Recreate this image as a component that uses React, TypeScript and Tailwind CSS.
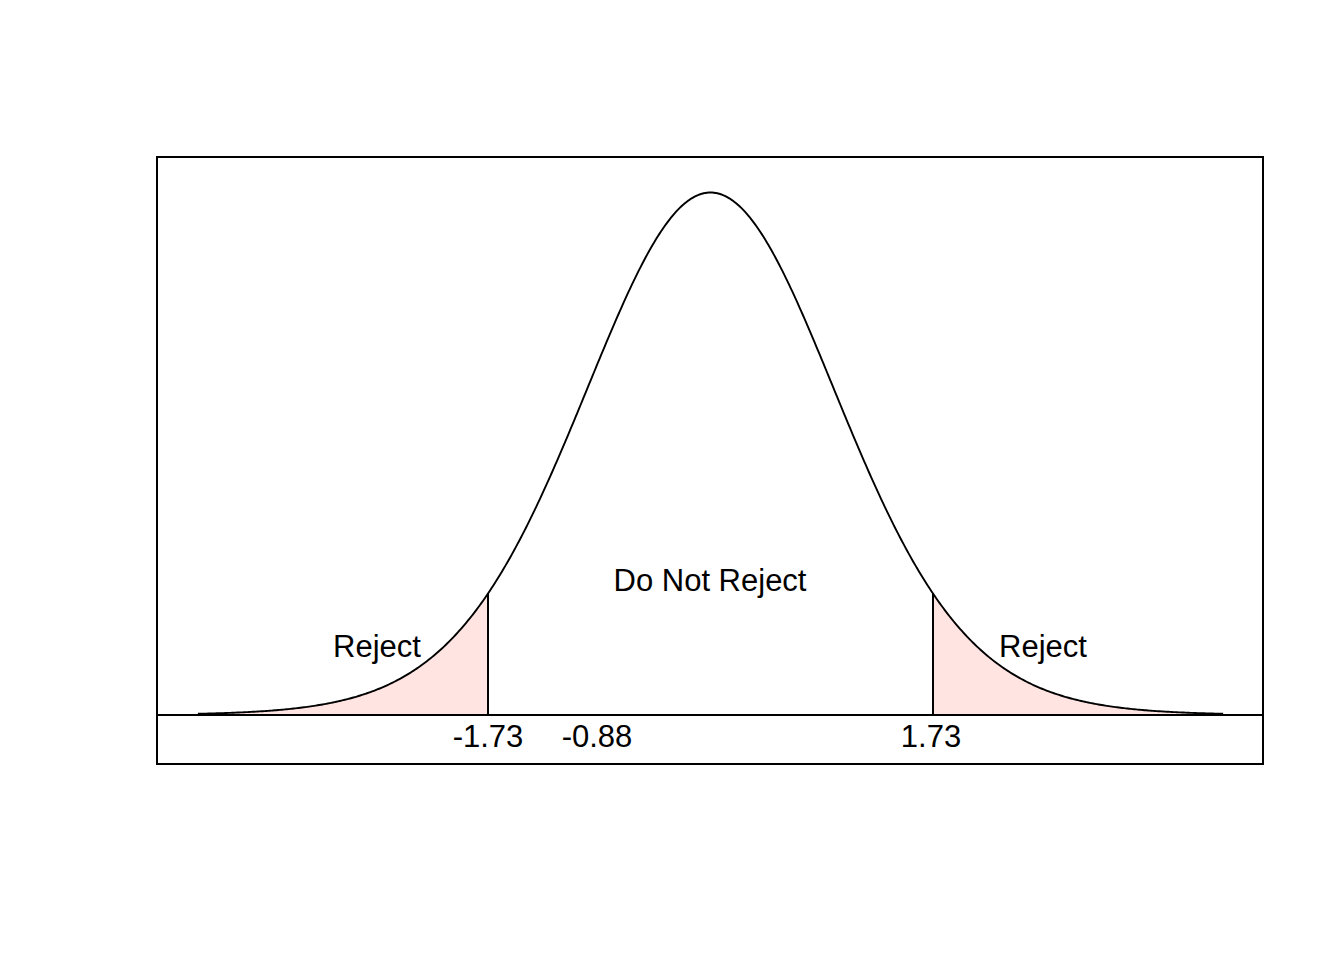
const CX = 710.5;
const SCALE = 128.8; // px per unit
const BASE = 715;
const PEAK = 522.5;
const DF = 19;
const LIM = 3.98;
const CRIT = 1.73;

// t density, scaled so f(0) = 1
function dens(z: number) {
	return Math.pow(1 + (z * z) / DF, -(DF + 1) / 2);
}

function px(z: number) {
	return CX + z * SCALE;
}

function py(z: number) {
	return BASE - PEAK * dens(z);
}

function curvePoints(from: number, to: number, steps: number) {
	const pts: string[] = [];
	for (let i = 0; i <= steps; i++) {
		const z = from + ((to - from) * i) / steps;
		pts.push(`${px(z).toFixed(2)},${py(z).toFixed(2)}`);
	}
	return pts;
}

function tailPolygon(from: number, to: number) {
	const pts = curvePoints(from, to, 120);
	pts.push(`${px(to).toFixed(2)},${BASE}`);
	pts.push(`${px(from).toFixed(2)},${BASE}`);
	return pts.join(" ");
}

const font = { fontFamily: '"Liberation Sans", Arial, sans-serif' };

function RejectionPlot() {
	const curve = curvePoints(-LIM, LIM, 600).join(" ");
	return (
		<svg width={1110} height={612} viewBox="155 155 1110 612" className="block" style={font}>
			<polygon points={tailPolygon(-LIM, -CRIT)} fill="#FFE4E1" />
			<polygon points={tailPolygon(CRIT, LIM)} fill="#FFE4E1" />
			<polyline points={curve} fill="none" stroke="#000" strokeWidth={1.9} strokeLinejoin="round" />
			<g stroke="#000" strokeWidth={2} shapeRendering="crispEdges">
				<line x1={157} y1={157} x2={1263} y2={157} />
				<line x1={157} y1={764} x2={1263} y2={764} />
				<line x1={157} y1={156} x2={157} y2={765} />
				<line x1={1263} y1={156} x2={1263} y2={765} />
				<line x1={157} y1={BASE} x2={1263} y2={BASE} />
				<line x1={488} y1={py(-CRIT)} x2={488} y2={BASE} />
				<line x1={933} y1={py(CRIT)} x2={933} y2={BASE} />
			</g>
			<g fontSize={31} fill="#000" textAnchor="middle">
				<text x={710} y={591}>Do Not Reject</text>
				<text x={377} y={657}>Reject</text>
				<text x={1043} y={657}>Reject</text>
				<text x={488} y={747}>-1.73</text>
				<text x={597} y={747}>-0.88</text>
				<text x={931} y={747}>1.73</text>
			</g>
		</svg>
	);
}

export default function App() {
	return (
		<main className="w-[1344px] h-[960px] bg-white pl-[155px] pt-[155px]">
			<RejectionPlot />
		</main>
	);
}
